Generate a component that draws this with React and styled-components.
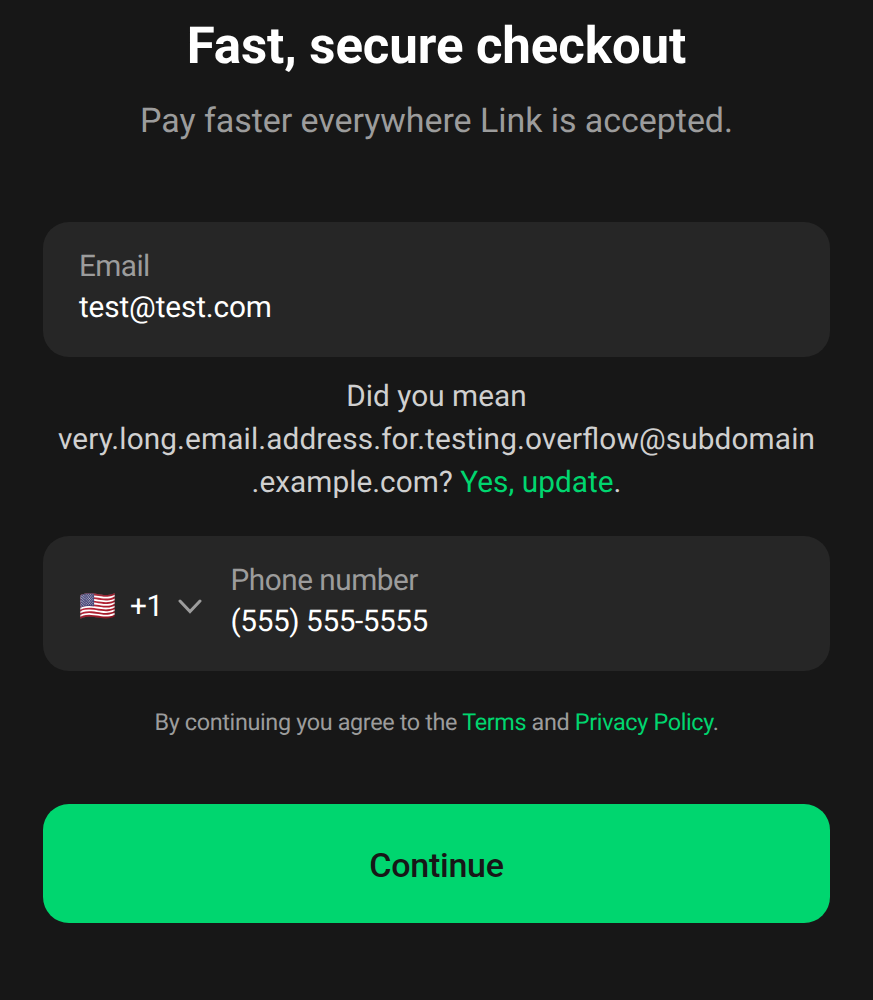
import React from "react";
import styled, { createGlobalStyle } from "styled-components";

const Global = createGlobalStyle`
  *{box-sizing:border-box}
  body{margin:0;background:#171717;font-family:Roboto,sans-serif;-webkit-font-smoothing:antialiased;text-rendering:geometricPrecision}
`;
const Screen = styled.main`
  height:1000px;width:873px;padding:17px 43px 0;background:#171717;display:flex;flex-direction:column;overflow:hidden;
`;
const Title = styled.h1`
  margin:0;font-size:51px;line-height:60px;font-weight:700;color:#fff;text-align:center;letter-spacing:-.1px;white-space:nowrap;
`;
const Subtitle = styled.p`
  margin:22px 0 0;font-size:34px;line-height:44px;color:#9c9c9c;text-align:center;white-space:nowrap;letter-spacing:-.05px;
`;
const Field = styled.section`
  height:135px;border-radius:26px;background:#262626;display:flex;align-items:center;padding:0 36px;margin-top:${p => p.$top}px;flex:none;
`;
const FieldText = styled.div`
  display:flex;flex-direction:column;line-height:41px;font-size:29.75px;white-space:nowrap;padding-bottom:6px;
`;
const Label = styled.label`color:#9c9c9c;letter-spacing:${p => p.$spacing}px;`;
const Value = styled.span`color:#fff;letter-spacing:${p => p.$spacing}px;`;
const Suggestion = styled.p`
  margin:18px 0 0;font-size:29.75px;line-height:43px;color:#d0d0d0;text-align:center;white-space:nowrap;font-feature-settings:"liga" 1;
`;
const Line = styled.span`display:block;letter-spacing:${p => p.$spacing || 0}px;`;
const Link = styled.a`color:#00d66f;`;
const Country = styled.div`
  display:flex;align-items:center;width:151.6px;color:#fff;font-size:29.75px;padding:5px 0 0 .5px;
  svg{flex:none}
`;
const Code = styled.span`margin:0 15.4px 0 13.5px;letter-spacing:-.5px;`;
const Terms = styled.p`
  margin:34px 0 0;font-size:23.4px;line-height:34px;color:#9c9c9c;text-align:center;white-space:nowrap;letter-spacing:-.35px;
`;
const Continue = styled.button`
  height:119px;flex:none;margin-top:65px;padding:3px 0 0;border:0;border-radius:26px;background:#00d66f;color:#171717;font:500 34px/44px Roboto,sans-serif;letter-spacing:-.25px;
`;
export default function App() {
  return <><Global/><Screen>
    <Title>Fast, secure checkout</Title>
    <Subtitle>Pay faster everywhere Link is accepted.</Subtitle>
    <Field $top={79}><FieldText><Label $spacing={-.6}>Email</Label><Value $spacing={-.12}>test@test.com</Value></FieldText></Field>
    <Suggestion><Line $spacing={.05}>Did you mean</Line><Line $spacing={.13}>very.long.email.address.for.testing.overflow@subdomain</Line><Line $spacing={.03}>.example.com? <Link>Yes, update</Link>.</Line></Suggestion>
    <Field $top={32}><Country><span>🇺🇸</span><Code>+1</Code><svg width="24" height="15" viewBox="0 0 24 15" fill="none" stroke="#9c9c9c" strokeWidth="3" strokeLinecap="round"><path d="M2 2 12 12.5 22 2"/></svg></Country>
    <FieldText><Label $spacing={-.5}>Phone number</Label><Value $spacing={-.43}>(555) 555-5555</Value></FieldText></Field>
    <Terms>By continuing you agree to the <Link>Terms</Link> and <Link>Privacy Policy</Link>.</Terms>
    <Continue>Continue</Continue>
  </Screen></>;
}
